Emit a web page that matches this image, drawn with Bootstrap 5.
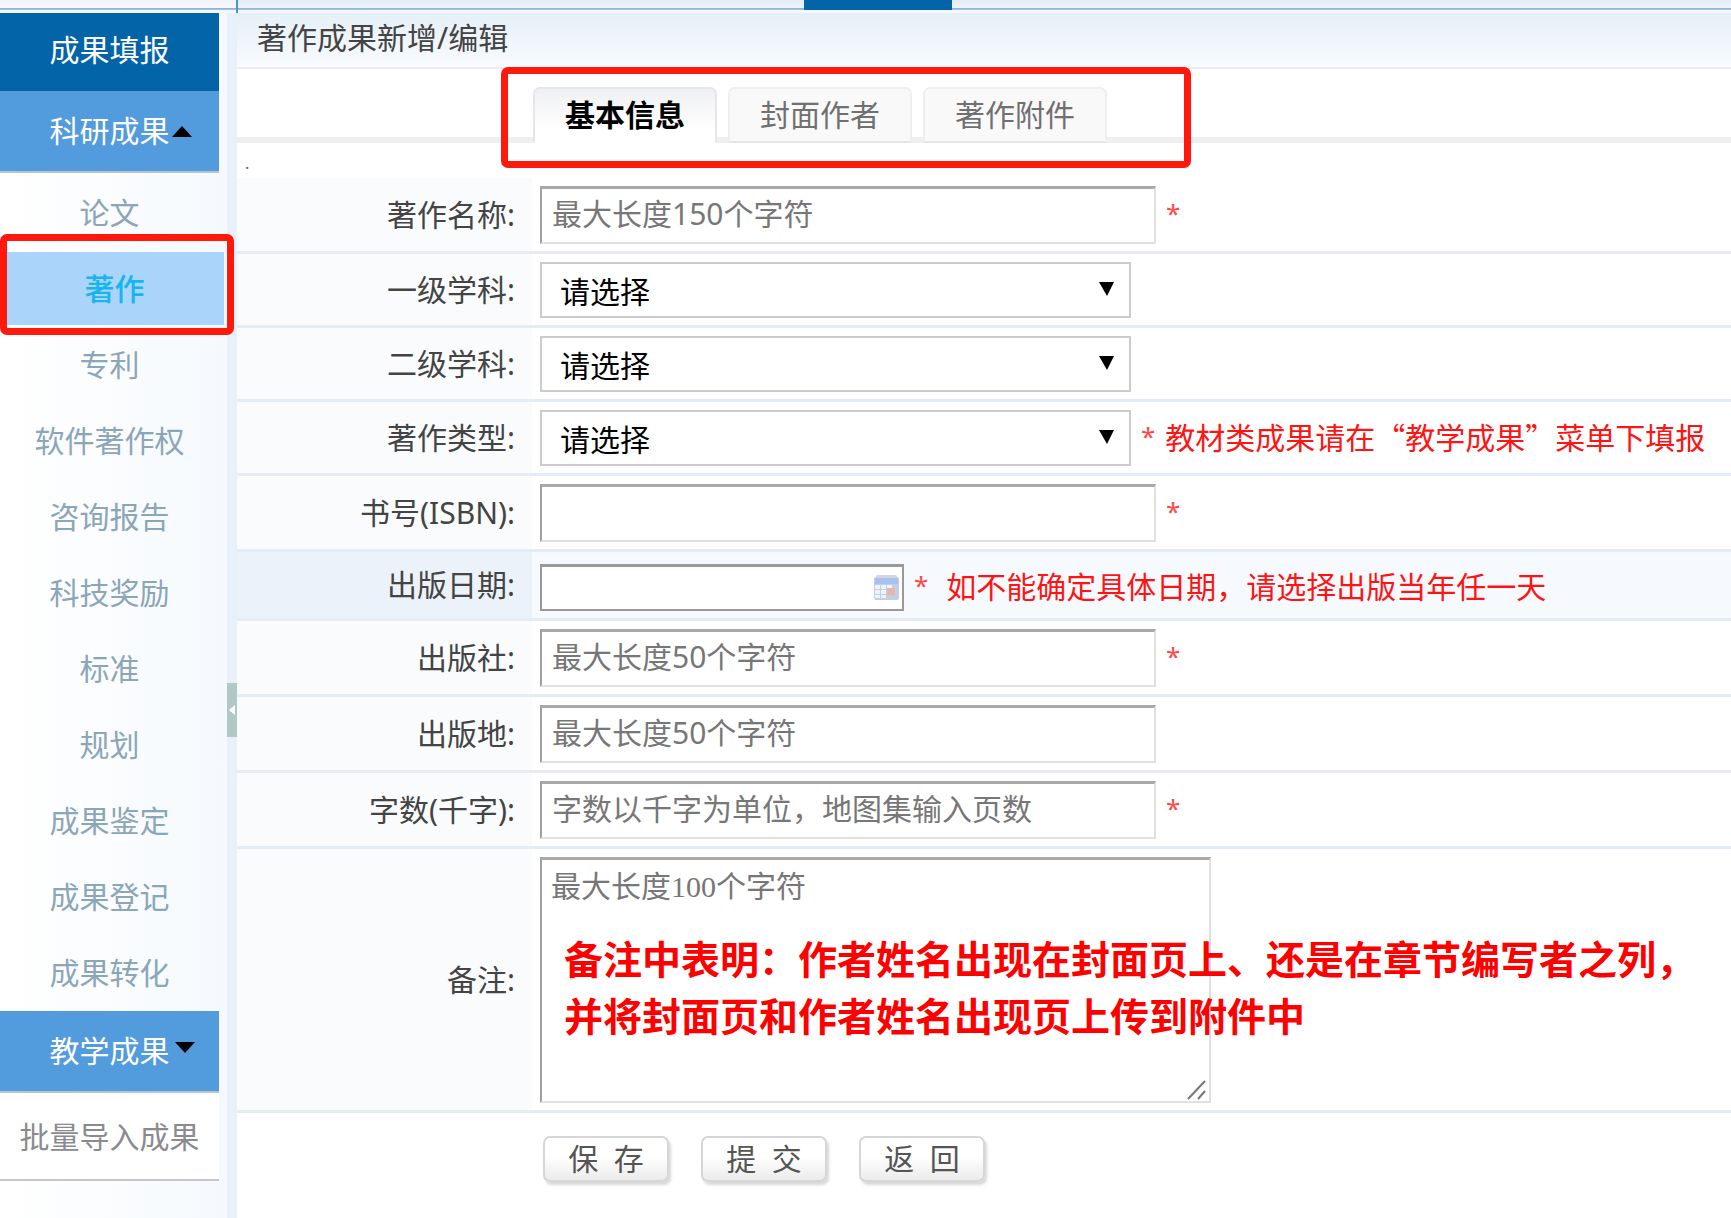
<!DOCTYPE html>
<html lang="zh-CN">
<head>
<meta charset="utf-8">
<meta name="viewport" content="width=device-width, initial-scale=1">
<title>著作成果新增/编辑</title>
<link href="https://cdn.jsdelivr.net/npm/bootstrap@5.3.0/dist/css/bootstrap.min.css" rel="stylesheet">
<style>
  body { font-family: "Noto Sans", "Noto Sans CJK SC", sans-serif; font-size: 30px; line-height: 40px; color: #444; background: #fff; }
  a { text-decoration: none; }

  /* strip above the page */
  .top-strip { height: 13px; background: linear-gradient(#e3eef9, #edf4fb 8px, #85afd4 8px, #a9c8e2 10px, #f4f8fc 10px); }
  .top-strip-side { width: 238px; border-right: 2px solid #4b94cc; background: linear-gradient(#f1f5f9, #f6f8fb 8px, #85afd4 8px, #a9c8e2 10px, #f4f8fc 10px); }
  .top-strip-mark { width: 148px; height: 10px; margin-left: 566px; background: #0365a8; }

  /* side menu */
  .side { width: 227px; background: linear-gradient(90deg, #fff, #f5f9fd); }
  .side-menu { width: 219px; }
  .side-menu a { display: flex; align-items: center; justify-content: center; height: 76px; color: #8ba6b9; }
  .side-menu a.side-head { height: 78px; padding-bottom: 4px; background: #0365a8; color: #fff; }
  .side-menu a.side-group { height: 82px; margin-bottom: 2px; background: #529bdc; color: #fff; border-bottom: 2px solid #b9c3cc; }
  .side-menu a.side-batch { height: 86px; background: #fff; color: #8b8b8f; border-bottom: 2px solid #c6c6c6; }
  .side-menu .side-current { height: 76px; padding: 1px 0 2px 5px; }
  .side-menu .side-current a { width: 219px; height: 73px; background: #aad4fa; color: #17b5f0; font-weight: 500; }
  .side-caret { left: 100%; top: 15px; margin-left: 2px; }
  .side-caret-down { left: 100%; top: 10px; margin-left: 5px; }
  .side-frame { left: 0; top: -17px; width: 234px; height: 101px; }
  .red-frame { position: absolute; border: 7px solid #ff190c; border-radius: 7px; pointer-events: none; z-index: 5; }
  .splitter { width: 10px; background: #e8f1f9; }
  .splitter-handle { top: 670px; width: 10px; height: 54px; background: #b0c9c7; border: 0; }

  /* heading and tabs */
  .page-title { height: 56px; padding: 0 20px; font-size: 30px; line-height: 50px; font-weight: 400; background: linear-gradient(#e6eff7, #f8fbfe); border-bottom: 2px solid #e8eef6; }
  .tab-strip { height: 74px; padding: 18px 0 0 296px; gap: 11px; border-bottom: 6px solid #efefef; }
  .tab-strip button { width: 184px; height: 56px; padding: 0; border: 2px solid #efefef; border-radius: 7px 7px 0 0; background: #f9f9fa; color: #707070; border-bottom-color: #e6e6e6; }
  .tab-strip button.tab-current { background: linear-gradient(#eff0f3, #fff 80%); border-color: #e6e6e8; border-bottom-color: #fff; color: #000; font-weight: 700; }
  .tab-frame { left: 264px; top: -2px; width: 690px; height: 101px; }
  .tiny-dot { height: 35px; padding-left: 8px; font-size: 16px; line-height: 40px; color: #666; }

  /* form table */
  .form-line { border-bottom: 3px solid #e4edf6; }
  .form-line > label { flex: 0 0 295px; display: flex; align-items: center; justify-content: flex-end; padding-right: 17px; background: #fafbfd; }
  .form-line > div { flex: 1 1 0; min-width: 0; display: flex; align-items: center; gap: 10px; padding: 8px 0 7px 8px; background: #fff; }
  .form-line.line-hot > label { background: #ebf2f9; }
  .form-line.line-hot > div { background: #f6fafe; padding-top: 12px; }
  .box, .area-box { width: 616px; height: 58px; padding: 0 10px 4px; border: 2px solid #e0e0e0; border-top: 3px solid #a9a9a9; border-left-color: #a0a0a0; border-radius: 0; background: #fff; color: #333; outline: 0; }
  .box::placeholder, .area-box::placeholder { color: #777; opacity: 1; }
  .pick { display: block; width: 591px; height: 56px; padding: 4px 18px 0; border: 2px solid #ccc; border-radius: 0; appearance: none; background: #fff; color: #000; outline: 0; }
  .pick-arrow { right: 17px; top: 20px; pointer-events: none; }
  .date-box { display: block; width: 364px; height: 47px; border: 2px solid #999; border-top-width: 3px; padding: 0 40px 0 10px; background: #fff; outline: 0; }
  .date-icon { right: 4px; top: 10px; }
  .area-box { display: block; width: 671px; height: 246px; padding: 7px 9px; resize: none; font-family: "Liberation Serif", "Noto Sans CJK SC", serif; }
  .area-grip { left: 647px; top: 223px; pointer-events: none; }
  .red-note { left: 24px; top: 73px; color: red; font-size: 39px; font-weight: 700; line-height: 57px; white-space: nowrap; pointer-events: none; }
  .hint { padding-bottom: 5px; color: #ff1414; font-family: "Noto Sans CJK SC", sans-serif; white-space: nowrap; }
  .star { padding-bottom: 5px; color: #ff4848; font-size: 26px; }

  .actions { padding: 23px 0 30px 306px; gap: 32px; }
  .actions button { width: 126px; height: 46px; padding: 0; line-height: 38px; border: 2px solid #d6d6d6; border-radius: 7px; background: linear-gradient(#fff 45%, #ebebeb); color: #555; box-shadow: 2px 3px 3px #d8d8d8; }
</style>
</head>
<body>
<div class="min-vh-100 d-flex flex-column">
  <header class="top-strip d-flex">
    <div class="top-strip-side"></div>
    <div class="top-strip-mark"></div>
  </header>

  <div class="d-flex flex-grow-1">
    <aside class="side flex-shrink-0">
      <nav class="side-menu">
        <a class="side-head" href="#">成果填报</a>
        <a class="side-group" href="#"><span class="position-relative">科研成果<svg class="side-caret position-absolute" width="20" height="12" viewBox="0 0 20 12"><path d="M0 11L10 0L20 11Z" fill="#000"/></svg></span></a>
        <a href="#">论文</a>
        <div class="side-current position-relative">
          <a href="#">著作</a>
          <span class="red-frame side-frame"></span>
        </div>
        <a href="#">专利</a>
        <a href="#">软件著作权</a>
        <a href="#">咨询报告</a>
        <a href="#">科技奖励</a>
        <a href="#">标准</a>
        <a href="#">规划</a>
        <a href="#">成果鉴定</a>
        <a href="#">成果登记</a>
        <a href="#">成果转化</a>
        <a class="side-group" href="#"><span class="position-relative">教学成果<svg class="side-caret-down position-absolute" width="20" height="12" viewBox="0 0 20 12"><path d="M0 1H20L10 12Z" fill="#000"/></svg></span></a>
        <a class="side-batch" href="#">批量导入成果</a>
      </nav>
    </aside>

    <div class="splitter flex-shrink-0 position-relative">
      <button class="splitter-handle position-absolute start-0 p-0 d-flex align-items-center" type="button" aria-label="收起菜单"><svg width="10" height="12" viewBox="0 0 10 12"><path d="M2 6L8 1V11Z" fill="#fff"/></svg></button>
    </div>

    <main class="flex-grow-1">
      <h1 class="page-title m-0">著作成果新增/编辑</h1>
      <div class="position-relative">
        <div class="tab-strip d-flex" role="tablist">
          <button class="tab-current" type="button" role="tab" aria-selected="true">基本信息</button>
          <button type="button" role="tab" aria-selected="false">封面作者</button>
          <button type="button" role="tab" aria-selected="false">著作附件</button>
        </div>
        <span class="red-frame tab-frame"></span>
      </div>
      <div class="tiny-dot">.</div>

      <form>
        <div class="form-line d-flex">
          <label for="f-name">著作名称:</label>
          <div><input id="f-name" class="box" type="text" placeholder="最大长度150个字符"><span class="star">*</span></div>
        </div>
        <div class="form-line d-flex">
          <label for="f-sub1">一级学科:</label>
          <div><span class="position-relative"><select id="f-sub1" class="pick"><option>请选择</option></select><svg class="pick-arrow position-absolute" width="15" height="14" viewBox="0 0 15 14"><path d="M0 0H15L8 14Z" fill="#000"/></svg></span></div>
        </div>
        <div class="form-line d-flex">
          <label for="f-sub2">二级学科:</label>
          <div><span class="position-relative"><select id="f-sub2" class="pick"><option>请选择</option></select><svg class="pick-arrow position-absolute" width="15" height="14" viewBox="0 0 15 14"><path d="M0 0H15L8 14Z" fill="#000"/></svg></span></div>
        </div>
        <div class="form-line d-flex">
          <label for="f-type">著作类型:</label>
          <div><span class="position-relative"><select id="f-type" class="pick"><option>请选择</option></select><svg class="pick-arrow position-absolute" width="15" height="14" viewBox="0 0 15 14"><path d="M0 0H15L8 14Z" fill="#000"/></svg></span><span class="star">*</span><span class="hint">教材类成果请在“教学成果”菜单下填报</span></div>
        </div>
        <div class="form-line d-flex">
          <label for="f-isbn">书号(ISBN):</label>
          <div><input id="f-isbn" class="box" type="text"><span class="star">*</span></div>
        </div>
        <div class="form-line line-hot d-flex">
          <label for="f-date">出版日期:</label>
          <div><span class="position-relative"><input id="f-date" class="date-box" type="text"><svg class="date-icon position-absolute" width="27" height="27" viewBox="0 0 27 27"><rect x="1" y="3" width="25" height="23" rx="2" fill="#c3cfe3"/><path d="M4 1H23L25 4H2Z" fill="#d5d6d9"/><rect x="2" y="4" width="23" height="6" fill="#a9c1ee"/><path d="M2 11h5v4H2zM8 11h5v4H8zM14 11h5v4h-5zM2 16h5v4H2zM8 16h5v4H8zM2 21h5v3H2zM8 21h5v3H8z" fill="#edf3fc"/><rect x="14" y="14" width="8" height="7" fill="#eab4a8"/></svg></span><span class="star">*</span><span class="hint ms-2">如不能确定具体日期，请选择出版当年任一天</span></div>
        </div>
        <div class="form-line d-flex">
          <label for="f-press">出版社:</label>
          <div><input id="f-press" class="box" type="text" placeholder="最大长度50个字符"><span class="star">*</span></div>
        </div>
        <div class="form-line d-flex">
          <label for="f-place">出版地:</label>
          <div><input id="f-place" class="box" type="text" placeholder="最大长度50个字符"></div>
        </div>
        <div class="form-line d-flex">
          <label for="f-words">字数(千字):</label>
          <div><input id="f-words" class="box" type="text" placeholder="字数以千字为单位，地图集输入页数"><span class="star">*</span></div>
        </div>
        <div class="form-line d-flex">
          <label for="f-memo">备注:</label>
          <div><span class="position-relative"><textarea id="f-memo" class="area-box" placeholder="最大长度100个字符"></textarea><svg class="area-grip position-absolute" width="20" height="20" viewBox="0 0 20 20"><path d="M1 19L18 1M11 19L18 11" stroke="#777" stroke-width="2" fill="none"/></svg><span class="red-note position-absolute">备注中表明：作者姓名出现在封面页上、还是在章节编写者之列，<br>并将封面页和作者姓名出现页上传到附件中</span></span></div>
        </div>
        <div class="actions d-flex">
          <button type="button">保&nbsp;&nbsp;存</button>
          <button type="submit">提&nbsp;&nbsp;交</button>
          <button type="button">返&nbsp;&nbsp;回</button>
        </div>
      </form>
    </main>
  </div>
</div>
<script src="https://cdn.jsdelivr.net/npm/bootstrap@5.3.0/dist/js/bootstrap.bundle.min.js"></script>
</body>
</html>
